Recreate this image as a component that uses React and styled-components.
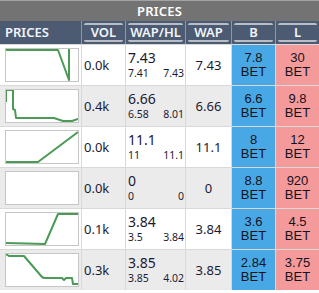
import React from "react";
import styled, { createGlobalStyle } from "styled-components";

const GlobalStyle = createGlobalStyle`
  html, body {
    margin: 0;
    padding: 0;
    background: #ffffff;
  }
  body {
    font-family: "Noto Sans", "DejaVu Sans", sans-serif;
  }
`;

const COLS = "81px 43px 59px 45px 43px 43px";

const Board = styled.div`
  width: 319px;
  background: #d9d9d9;
  display: flex;
  flex-direction: column;
  gap: 1px;
`;

const TitleBar = styled.div`
  height: 20px;
  background: #737373;
  border-top: 1px solid #a3a3a3;
  color: #ffffff;
  font-size: 13px;
  font-weight: 600;
  display: flex;
  align-items: center;
  justify-content: center;
  letter-spacing: 0.2px;
`;

const HeaderRow = styled.div`
  display: grid;
  grid-template-columns: ${COLS};
  column-gap: 1px;
  background: #8c98a8;
  height: 23px;
  margin-top: -1px;
`;

const HeadCell = styled.div`
  background: #4c5b72;
  color: #f1f4f8;
  font-size: 13px;
  font-weight: 600;
  display: flex;
  align-items: stretch;
  justify-content: ${(p) => (p.$left ? "flex-start" : "center")};
  padding: ${(p) => (p.$left ? "0 0 0 5px" : "2px 2px")};
`;

const HeadLabel = styled.div`
  flex: 1;
  display: flex;
  align-items: center;
  justify-content: ${(p) => (p.$left ? "flex-start" : "center")};
  border-top: ${(p) => (p.$plain ? "none" : "2px solid #b9bec6")};
  border-bottom: ${(p) => (p.$plain ? "none" : "2px solid #b9bec6")};
  border-radius: 2px;
  line-height: 1;
`;

const Row = styled.div`
  display: grid;
  grid-template-columns: ${COLS};
  column-gap: 1px;
  height: 40px;
`;

const Cell = styled.div`
  background: ${(p) => (p.$alt ? "#ebebeb" : "#ffffff")};
  color: #1b1a33;
  font-size: 13px;
  display: flex;
  align-items: center;
  justify-content: ${(p) => (p.$center ? "center" : "flex-start")};
  padding-left: ${(p) => (p.$center ? "0" : "2px")};
`;

const ChartBox = styled.div`
  margin-left: 3px;
  width: 74px;
  height: 34px;
  box-sizing: border-box;
  border: 1px solid #c6c6c6;
  background: #ffffff;
  display: flex;
`;

const WapCell = styled.div`
  background: ${(p) => (p.$alt ? "#ebebeb" : "#ffffff")};
  color: #1b1a33;
  display: flex;
  flex-direction: column;
  padding: 5px 1px 0 2px;
`;

const WapMain = styled.div`
  font-size: 14px;
  line-height: 15px;
`;

const WapSub = styled.div`
  display: flex;
  justify-content: space-between;
  font-size: 10.5px;
  line-height: 12px;
  margin-top: 2px;
`;

const BetCell = styled.div`
  background: ${(p) => (p.$back ? "#48a8e6" : "#f59a9a")};
  color: #131320;
  font-family: "Liberation Sans", Arial, sans-serif;
  font-size: 13px;
  display: flex;
  flex-direction: column;
  align-items: center;
  justify-content: center;
`;

const BetLine = styled.span`
  display: block;
  line-height: 14.5px;
  height: 14.5px;
`;

const Spark = ({ points }) => (
  <svg width="72" height="32" viewBox="0 0 72 32" style={{ display: "block" }}>
    {points && (
      <polyline
        points={points}
        fill="none"
        stroke="#4b9b56"
        strokeWidth="2"
        strokeLinejoin="round"
      />
    )}
  </svg>
);

const rows = [
  {
    spark: "0,1 52,1 63,31 63,0",
    vol: "0.0k",
    wap: "7.43",
    lo: "7.41",
    hi: "7.43",
    b: "7.8",
    l: "30",
  },
  {
    spark: "0,12 0,0 7,0 7,19 9,20 10,28 48,28 57,31 66,31 72,29",
    vol: "0.4k",
    wap: "6.66",
    lo: "6.58",
    hi: "8.01",
    b: "6.6",
    l: "9.8",
  },
  {
    spark: "0,31 32,31 72,1",
    vol: "0.0k",
    wap: "11.1",
    lo: "11",
    hi: "11.1",
    b: "8",
    l: "12",
  },
  {
    spark: null,
    vol: "0.0k",
    wap: "0",
    lo: "0",
    hi: "0",
    b: "8.8",
    l: "920",
  },
  {
    spark: "0,30 39,31 52,1 72,1",
    vol: "0.1k",
    wap: "3.84",
    lo: "3.5",
    hi: "3.84",
    b: "3.6",
    l: "4.5",
  },
  {
    spark: "0,0 3,2 18,2 36,23 38,24 56,24 58,26 60,24 66,24 67,30 72,30",
    vol: "0.3k",
    wap: "3.85",
    lo: "3.85",
    hi: "4.02",
    b: "2.84",
    l: "3.75",
  },
];

const headers = ["VOL", "WAP/HL", "WAP", "B", "L"];

export default function App() {
  return (
    <>
      <GlobalStyle />
      <Board>
        <TitleBar>PRICES</TitleBar>
        <HeaderRow>
          <HeadCell $left>
            <HeadLabel $left $plain>
              PRICES
            </HeadLabel>
          </HeadCell>
          {headers.map((h) => (
            <HeadCell key={h}>
              <HeadLabel>{h}</HeadLabel>
            </HeadCell>
          ))}
        </HeaderRow>
        {rows.map((r, i) => {
          const alt = i % 2 === 1;
          return (
            <Row key={i}>
              <Cell $alt={alt}>
                <ChartBox>
                  <Spark points={r.spark} />
                </ChartBox>
              </Cell>
              <Cell $alt={alt}>{r.vol}</Cell>
              <WapCell $alt={alt}>
                <WapMain>{r.wap}</WapMain>
                <WapSub>
                  <span>{r.lo}</span>
                  <span>{r.hi}</span>
                </WapSub>
              </WapCell>
              <Cell $alt={alt} $center>
                {r.wap}
              </Cell>
              <BetCell $back>
                <BetLine>{r.b}</BetLine>
                <BetLine>BET</BetLine>
              </BetCell>
              <BetCell>
                <BetLine>{r.l}</BetLine>
                <BetLine>BET</BetLine>
              </BetCell>
            </Row>
          );
        })}
      </Board>
    </>
  );
}
